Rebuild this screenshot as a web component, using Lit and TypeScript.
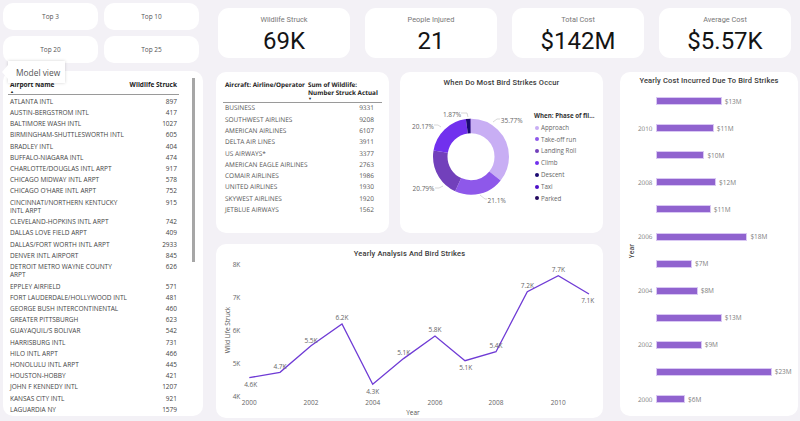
import { LitElement, html, svg, css } from 'lit'
import { customElement } from 'lit/decorators.js'

// names carry their line break where the table wraps them
const airports: [string, number][] = [
  ['ATLANTA INTL', 897],
  ['AUSTIN-BERGSTROM INTL', 417],
  ['BALTIMORE WASH INTL', 1027],
  ['BIRMINGHAM-SHUTTLESWORTH INTL', 605],
  ['BRADLEY INTL', 404],
  ['BUFFALO-NIAGARA INTL', 474],
  ['CHARLOTTE/DOUGLAS INTL ARPT', 917],
  ['CHICAGO MIDWAY INTL ARPT', 578],
  ["CHICAGO O'HARE INTL ARPT", 752],
  ['CINCINNATI/NORTHERN KENTUCKY\nINTL ARPT', 915],
  ['CLEVELAND-HOPKINS INTL ARPT', 742],
  ['DALLAS LOVE FIELD ARPT', 409],
  ['DALLAS/FORT WORTH INTL ARPT', 2933],
  ['DENVER INTL AIRPORT', 845],
  ['DETROIT METRO WAYNE COUNTY\nARPT', 626],
  ['EPPLEY AIRFIELD', 571],
  ['FORT LAUDERDALE/HOLLYWOOD INTL', 481],
  ['GEORGE BUSH INTERCONTINENTAL', 460],
  ['GREATER PITTSBURGH', 623],
  ['GUAYAQUIL/S BOLIVAR', 542],
  ['HARRISBURG INTL', 731],
  ['HILO INTL ARPT', 466],
  ['HONOLULU INTL ARPT', 445],
  ['HOUSTON-HOBBY', 421],
  ['JOHN F KENNEDY INTL', 1207],
  ['KANSAS CITY INTL', 921],
  ['LAGUARDIA NY', 1579],
]

const airlines: [string, number][] = [
  ['BUSINESS', 9331],
  ['SOUTHWEST AIRLINES', 9208],
  ['AMERICAN AIRLINES', 6107],
  ['DELTA AIR LINES', 3911],
  ['US AIRWAYS*', 3377],
  ['AMERICAN EAGLE AIRLINES', 2763],
  ['COMAIR AIRLINES', 1986],
  ['UNITED AIRLINES', 1930],
  ['SKYWEST AIRLINES', 1920],
  ['JETBLUE AIRWAYS', 1562],
]

const kpis = [
  ['Wildlife Struck', '69K'],
  ['People Injured', '21'],
  ['Total Cost', '$142M'],
  ['Average Cost', '$5.57K'],
]

const phases: [string, number, string][] = [
  ['Approach', 35.77, '#c8aef4'],
  ['Take-off run', 21.1, '#8e58ea'],
  ['Landing Roll', 20.79, '#7240bb'],
  ['Climb', 20.17, '#7130ee'],
  ['Descent', 1.87, '#1b0a72'],
  ['Taxi', 0.2, '#4d10c8'],
  ['Parked', 0.1, '#23095e'],
]

// leader line points and label position, in page coordinates
const donutLabels: [string, number, number, string][] = [
  ['35.77%', 511.7, 120.7, '493,122 497,119 500,119'],
  ['21.1%', 496.7, 200, '480,195 485,199 487,199'],
  ['20.79%', 423.5, 188.7, '435,188 439,188 443,186'],
  ['20.17%', 423, 126.7, '434,125 438,125 441,127'],
  ['1.87%', 452, 114, '461,113 467,113 468,117'],
]

const years: [number, number, number, number, number, string][] = [
  [2000, 249.3, 377.7, 250.7, 384.7, '4.6K'],
  [2001, 280, 372.3, 280, 366, '4.7K'],
  [2002, 311, 345.7, 311, 340, '5.5K'],
  [2003, 342, 324, 342, 317, '6.2K'],
  [2004, 372.7, 384.3, 372.7, 391.3, '4.3K'],
  [2005, 403.5, 358.6, 403.7, 352.7, '5.1K'],
  [2006, 435, 336, 435, 329, '5.8K'],
  [2007, 465, 360.7, 465.7, 367.7, '5.1K'],
  [2008, 496, 351.7, 496, 345.3, '5.4K'],
  [2009, 527.3, 291.7, 527.3, 285.3, '7.2K'],
  [2010, 558.3, 275.7, 558.3, 269.3, '7.7K'],
  [2011, 589, 294, 587.7, 300.3, '7.1K'],
]

const yearTicks: [string, number][] = [['8K', 264], ['7K', 297.5], ['6K', 330], ['5K', 363], ['4K', 396]]

const costs: [string, number, string][] = [
  ['', 64, '$13M'],
  ['2010', 56, '$11M'],
  ['', 46.7, '$10M'],
  ['2008', 58.3, '$12M'],
  ['', 53, '$11M'],
  ['2006', 89.7, '$18M'],
  ['', 34.3, '$7M'],
  ['2004', 40, '$8M'],
  ['', 64, '$13M'],
  ['2002', 44, '$9M'],
  ['', 114, '$23M'],
  ['2000', 27.3, '$6M'],
]

@customElement('app-root')
export class AppRoot extends LitElement {
  static styles = css`
    :host {
      display: block;
      width: 800px;
      height: 421px;
      overflow: hidden;
      background: #f3f1f6;
      font-family: 'Open Sans', sans-serif;
      color: #444;
    }

    .page {
      position: relative;
      display: flex;
      height: 421px;
    }

    .left {
      width: 200px;
      margin: 3px 13px 0 3px;
    }

    .slicers {
      display: grid;
      grid-template-columns: 95px 95px;
      grid-auto-rows: 27px;
      gap: 6px;
      margin-bottom: 8px;
    }

    .slicer {
      display: flex;
      align-items: center;
      justify-content: center;
      background: #fff;
      border-radius: 10px;
      font-size: 6.5px;
      color: #555;
    }

    .card {
      background: #fff;
      border-radius: 10px;
    }

    .airports {
      display: flex;
      height: 345px;
      padding: 0 8px 0 5px;
      box-sizing: border-box;
    }

    .table {
      width: 171px;
      font-size: 6.5px;
    }

    .thead {
      display: flex;
      justify-content: space-between;
      border-bottom: 1px solid #9a9a9a;
      font-weight: 700;
      color: #222;
      box-sizing: border-box;
    }

    .airports .thead {
      height: 24px;
      padding: 8.5px 2px 0;
      margin-bottom: 1.5px;
    }

    .row {
      display: flex;
      justify-content: space-between;
      align-items: flex-start;
      padding: 1.35px 2px;
      line-height: 8.5px;
    }

    .row .name {
      white-space: pre-line;
    }

    .sort {
      display: block;
      font-size: 4px;
      line-height: 5px;
      color: #222;
    }

    .track {
      width: 3px;
      height: 184px;
      margin: 7px 0 0 13px;
      background: #a6a6a6;
    }

    .right {
      display: flex;
      flex-direction: column;
      width: 584px;
    }

    .kpis {
      display: flex;
      gap: 15px;
      padding: 8px 0 0 2px;
      margin-bottom: 14px;
    }

    .kpi {
      display: flex;
      flex-direction: column;
      align-items: center;
      width: 132px;
      height: 50px;
      padding-top: 7px;
      box-sizing: border-box;
      background: #fff;
      border-radius: 11px;
    }

    .kpi label {
      font-family: Roboto, sans-serif;
      font-size: 7.4px;
      line-height: 9px;
      color: #777;
    }

    .kpi strong {
      font-family: Roboto, sans-serif;
      font-size: 24px;
      font-weight: 400;
      line-height: 35px;
      color: #141414;
    }

    .charts {
      display: flex;
      gap: 17px;
    }

    .middle {
      display: flex;
      flex-direction: column;
      gap: 11px;
      width: 387px;
    }

    .upper {
      display: flex;
      gap: 11px;
      height: 161px;
    }

    .airlines {
      width: 173px;
      padding: 9px 7px 0;
      box-sizing: border-box;
    }

    .airlines .table {
      width: 159px;
      font-size: 6.5px;
      color: #555;
      text-rendering: geometricPrecision;
    }

    .airlines .thead {
      height: 21.5px;
      padding: 0 2px;
      margin-bottom: 0.5px;
      justify-content: flex-start;
      font-size: 6.3px;
      line-height: 8px;
    }

    .airlines .thead span {
      white-space: nowrap;
    }

    .airlines .thead span:first-child {
      width: 83px;
    }

    .airlines .row {
      padding: 1.4px 8px 1.4px 2px;
    }

    .title {
      display: flex;
      align-items: center;
      justify-content: center;
      height: 18px;
      font-family: Roboto, sans-serif;
      font-size: 7.5px;
      font-weight: 500;
      letter-spacing: 0.15px;
      color: #3a3a3a;
    }

    .donut {
      width: 203px;
    }

    .donut .title {
      height: 20px;
    }

    .donut-body {
      display: flex;
    }

    .donut-body svg,
    .yearly svg {
      display: block;
    }

    .legend {
      margin: 18px 0 0 4px;
      font-size: 6.2px;
      line-height: 11.8px;
      color: #666;
    }

    .legend b {
      display: block;
      color: #333;
    }

    .legend div {
      display: flex;
      align-items: center;
      gap: 2.5px;
      padding-left: 0.5px;
    }

    .legend i {
      width: 4px;
      height: 4px;
      border-radius: 50%;
    }

    .yearly {
      height: 174px;
      padding-top: 2px;
      box-sizing: border-box;
    }

    .yearly .title {
      height: 14px;
    }

    .costs {
      display: flex;
      flex-direction: column;
      width: 178px;
      height: 344px;
    }

    .costs .title {
      height: 15.5px;
      padding-top: 1px;
      box-sizing: border-box;
    }

    .cost-body {
      display: flex;
      padding-left: 4px;
    }

    .axis {
      display: flex;
      align-items: center;
      justify-content: center;
      width: 14px;
      writing-mode: vertical-rl;
      transform: rotate(180deg);
      font-size: 6.5px;
      font-weight: 600;
      color: #444;
    }

    .bars {
      flex: 1;
    }

    .bar-row {
      display: flex;
      align-items: center;
      height: 27.1px;
      font-size: 6.5px;
      color: #808080;
    }

    .bar-row .year {
      width: 14px;
      margin-right: 4.7px;
      font-size: 6.3px;
      text-rendering: geometricPrecision;
      text-align: right;
      white-space: nowrap;
    }

    .bar {
      height: 6px;
      margin-right: 4px;
      background: #9063cf;
      outline: 0.5px solid #d9c8f3;
    }

    .tooltip {
      position: absolute;
      left: 8px;
      top: 61px;
      width: 57px;
      height: 22px;
      padding-left: 8px;
      box-sizing: border-box;
      background: #fff;
      box-shadow: 0 0 3px rgba(0, 0, 0, 0.18);
      font-size: 8.4px;
      line-height: 24px;
      color: #555;
    }

    .tooltip::before {
      content: '';
      position: absolute;
      left: -6px;
      top: 4px;
      border-style: solid;
      border-width: 7px 6px 7px 0;
      border-color: transparent #fff transparent transparent;
    }

    svg text {
      font-family: 'Open Sans', sans-serif;
      font-size: 6.5px;
      fill: #666;
      text-anchor: middle;
      dominant-baseline: central;
    }

    svg .axis-title {
      fill: #555;
    }
  `

  private renderDonut() {
    let offset = 0
    const arcs = phases.map(([, pct, color]) => {
      const arc = svg`<circle cx="471" cy="156.7" r="30.75" fill="none" stroke=${color} stroke-width="14.5"
        pathLength="100" stroke-dasharray="${pct} ${100 - pct}" stroke-dashoffset=${-offset}
        transform="rotate(-90 471 156.7)" />`
      offset += pct
      return arc
    })
    return html`
      <svg width="130" height="141" viewBox="400 92 130 141">
        ${arcs}
        ${donutLabels.map(([label, x, y, line]) => svg`
          <polyline points=${line} fill="none" stroke="#bdbdbd" stroke-width="0.6" />
          <text x=${x} y=${y}>${label}</text>
        `)}
      </svg>
    `
  }

  private renderLine() {
    const points = years.map((y) => `${y[1]},${y[2]}`).join(' ')
    return html`
      <svg width="387" height="158" viewBox="216 260 387 158">
        ${yearTicks.map(([label, y]) => svg`<text x="236.5" y=${y}>${label}</text>`)}
        ${years.filter((y) => y[0] % 2 === 0).map((y) => svg`<text x=${y[1]} y="402">${y[0]}</text>`)}
        <text class="axis-title" x="413" y="412">Year</text>
        <text class="axis-title" transform="translate(227 330) rotate(-90)">Wild Life Struck</text>
        <polyline points=${points} fill="none" stroke="#6f3bd5" stroke-width="1.3" />
        ${years.map((y) => svg`<text x=${y[3]} y=${y[4]}>${y[5]}</text>`)}
      </svg>
    `
  }

  render() {
    return html`
      <div class="page">
        <div class="left">
          <div class="slicers">
            ${['Top 3', 'Top 10', 'Top 20', 'Top 25'].map((t) => html`<div class="slicer">${t}</div>`)}
          </div>
          <div class="card airports">
            <div class="table">
              <div class="thead"><span>Airport Name<i class="sort">▲</i></span><span>Wildlife Struck</span></div>
              ${airports.map(([name, n]) => html`<div class="row"><span class="name">${name}</span><span>${n}</span></div>`)}
            </div>
            <div class="track"></div>
          </div>
        </div>

        <div class="right">
          <div class="kpis">
            ${kpis.map(([label, value]) => html`<div class="kpi"><label>${label}</label><strong>${value}</strong></div>`)}
          </div>
          <div class="charts">
            <div class="middle">
              <div class="upper">
                <div class="card airlines">
                  <div class="table">
                    <div class="thead">
                      <span>Aircraft: Airline/Operator</span>
                      <span>Sum of Wildlife:<br />Number Struck Actual<i class="sort">▼</i></span>
                    </div>
                    ${airlines.map(([name, n]) => html`<div class="row"><span class="name">${name}</span><span>${n}</span></div>`)}
                  </div>
                </div>
                <div class="card donut">
                  <div class="title">When Do Most Bird Strikes Occur</div>
                  <div class="donut-body">
                    ${this.renderDonut()}
                    <div class="legend">
                      <b>When: Phase of fli...</b>
                      ${phases.map(([name, , color]) => html`<div><i style="background:${color}"></i>${name}</div>`)}
                    </div>
                  </div>
                </div>
              </div>
              <div class="card yearly">
                <div class="title">Yearly Analysis And Bird Strikes</div>
                ${this.renderLine()}
              </div>
            </div>
            <div class="card costs">
              <div class="title">Yearly Cost Incurred Due To Bird Strikes</div>
              <div class="cost-body">
                <div class="axis">Year</div>
                <div class="bars">
                  ${costs.map(([year, w, label]) => html`
                    <div class="bar-row">
                      <span class="year">${year}</span>
                      <div class="bar" style="width:${w}px"></div>
                      <span>${label}</span>
                    </div>
                  `)}
                </div>
              </div>
            </div>
          </div>
        </div>

        <div class="tooltip">Model view</div>
      </div>
    `
  }
}

declare global {
  interface HTMLElementTagNameMap {
    'app-root': AppRoot
  }
}
